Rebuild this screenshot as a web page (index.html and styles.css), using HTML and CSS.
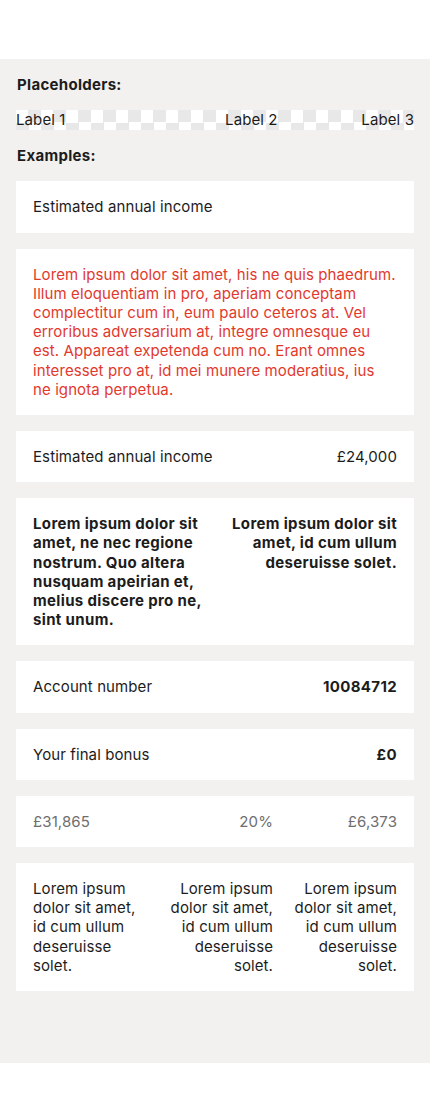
FILE: index.html
```html
<!DOCTYPE html>
<html lang="en">
<head>
<meta charset="utf-8">
<title>Rows</title>
<link rel="stylesheet" href="styles.css">
</head>
<body>
<div class="top"></div>
<main class="page">
  <h2 class="heading">Placeholders:</h2>
  <div class="labels">
    <span class="label">Label 1</span>
    <span class="spacer spacer-a"></span>
    <span class="label">Label 2</span>
    <span class="spacer spacer-b"></span>
    <span class="label">Label 3</span>
  </div>
  <h2 class="heading">Examples:</h2>

  <section class="card">
    <p class="text">Estimated annual income</p>
  </section>

  <section class="card">
    <p class="text error">Lorem ipsum dolor sit amet, his ne quis phaedrum. Illum eloquentiam in pro, aperiam conceptam complectitur cum in, eum paulo ceteros at. Vel erroribus adversarium at, integre omnesque eu est. Appareat expetenda cum no. Erant omnes interesset pro at, id mei munere moderatius, ius ne&nbsp;ignota perpetua.</p>
  </section>

  <section class="card row">
    <p class="text">Estimated annual income</p>
    <p class="text">£24,000</p>
  </section>

  <section class="card cols-2">
    <p class="text bold">Lorem ipsum dolor sit amet, ne nec regione nostrum. Quo altera nusquam apeirian et, melius discere pro ne, sint unum.</p>
    <p class="text bold right">Lorem ipsum dolor sit amet, id cum ullum deseruisse solet.</p>
  </section>

  <section class="card row">
    <p class="text">Account number</p>
    <p class="text bold">10084712</p>
  </section>

  <section class="card row">
    <p class="text">Your final bonus</p>
    <p class="text bold">£0</p>
  </section>

  <section class="card cols-3">
    <p class="text muted">£31,865</p>
    <p class="text muted right">20%</p>
    <p class="text muted right">£6,373</p>
  </section>

  <section class="card cols-3">
    <p class="text">Lorem ipsum dolor sit amet, id cum ullum deseruisse solet.</p>
    <p class="text right">Lorem ipsum dolor sit amet, id cum ullum deseruisse solet.</p>
    <p class="text right">Lorem ipsum dolor sit amet, id cum ullum deseruisse solet.</p>
  </section>
</main>
</body>
</html>
```

FILE: styles.css
```css
* { box-sizing: border-box; }

html, body {
  margin: 0;
  padding: 0;
  background: #ffffff;
}

body {
  font-family: Inter, "Noto Sans", "Liberation Sans", sans-serif;
  color: #1c1c1c;
  font-size: 15px;
  line-height: 19.2px;
  letter-spacing: 0.1px;
}

.top {
  height: 59px;
}

.page {
  background: #f2f1ef;
  padding: 16px 16px 72px;
  display: flex;
  flex-direction: column;
  gap: 16px;
}

.heading {
  margin: 0;
  font-size: 15px;
  line-height: 19.2px;
  font-weight: 700;
  letter-spacing: 0.3px;
  padding-left: 1px;
}

.labels {
  display: flex;
  align-items: center;
  height: 20px;
  background: repeating-conic-gradient(#e8e8e8 0 25%, #ffffff 0 50%);
  background-size: 25px 25px;
}

.label {
  font-size: 15px;
  line-height: 20px;
  white-space: nowrap;
}

.spacer-a { flex: 162; }
.spacer-b { flex: 85; }

.card {
  background: #ffffff;
  padding: 16px 17px 16px 17px;
}

.text {
  margin: 0;
}

.row {
  display: flex;
  justify-content: space-between;
  gap: 16px;
}

.cols-2 {
  display: grid;
  grid-template-columns: 1fr 1fr;
  column-gap: 16px;
}

.cols-3 {
  display: grid;
  grid-template-columns: 1fr 1fr 1fr;
  column-gap: 8px;
}

.bold {
  font-weight: 700;
  letter-spacing: 0.35px;
}
.right { text-align: right; }
.error { color: #e2392d; }
.muted { color: #6e6e6e; }
```
